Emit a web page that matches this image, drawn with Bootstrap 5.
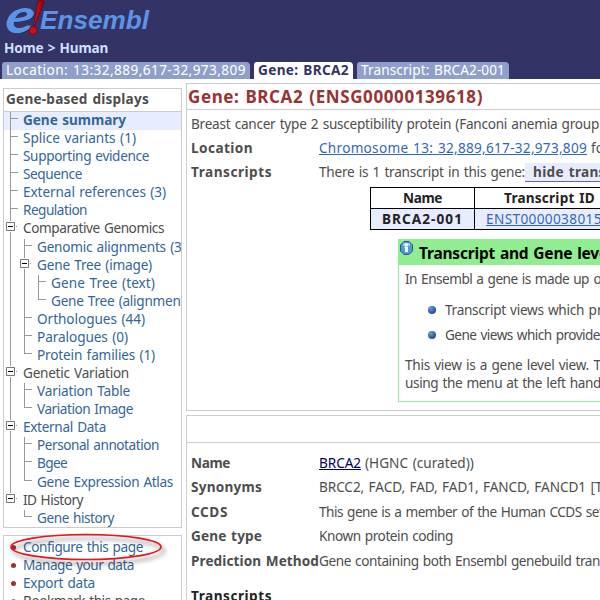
<!DOCTYPE html>
<html lang="en">
<head>
<meta charset="utf-8">
<meta name="viewport" content="width=device-width, initial-scale=1">
<title>Ensembl - Gene: BRCA2</title>
<link href="https://cdn.jsdelivr.net/npm/bootstrap@5.3.0/dist/css/bootstrap.min.css" rel="stylesheet">
<style>
body{width:600px;height:600px;overflow:hidden;background:#fff;color:#4d4d4d;font-family:"Noto Sans","Open Sans",sans-serif;font-size:13.6px;line-height:18px;white-space:nowrap;word-spacing:1px}
a{color:#336699;text-decoration:none}
b,.fw-bold{font-weight:700}
.masthead{height:79px;background:#333366;color:#cce0ff}
.logo{height:38px}
.crumbs{height:24px;padding:0 0 0 4px;line-height:19px}
.crumbs a{color:#cce0ff}
.tabs{height:17px;gap:4px;padding-left:2px}
.tabs a{height:17px;line-height:16px;padding:0 4px;background:#8f9fc9;color:#fff;border-radius:3px 4px 0 0}
.tabs a.current{background:#fff;color:#333366;font-weight:700}
.side{width:179px;margin:9px 0 0 3px}
.side .box{border:1px solid #ccc;overflow:hidden}
.boxtitle{height:23px;line-height:20px;padding-left:2px;border-bottom:1px solid #ccc;font-weight:700}
.tree{height:416px}
.tree .item{height:18.09px;line-height:15.6px;padding-left:5px}
.item.on{background:#e8ecff;font-weight:700}
.g{width:14px;height:18.09px;flex:none;position:relative}
.v::before,.t::before,.l::before,.m::before,.n::before{content:"";position:absolute;left:1px;top:0;width:1px;height:19px;background:#999}
.l::before{height:7px}
.n::before{height:6px}
.t::after,.l::after{content:"";position:absolute;left:1px;top:6px;width:8px;height:1px;background:#999}
.g svg{position:absolute;left:-3px;top:1px}
.tools .item{height:18px;line-height:18px;padding-left:7px}
.tools{height:80px;margin-top:7px;padding-top:2px}
.dot{width:5px;height:5px;border-radius:50%;background:#993333;margin-right:7px}
.ring{position:absolute;left:4px;top:528px}
.main{width:414px;margin:4px 0 0 4px;overflow:hidden}
.panel{border:1px solid #ccc;border-right:0}
.gene{height:328px}
.gene h1{height:26px;line-height:25px;font-size:17px;margin:0;padding-left:1px;font-weight:700;color:#993333;border-bottom:1px solid #ccc}
.desc{height:26px;line-height:27px;padding-left:4px}
.pair{padding-left:4px;height:24.4px;line-height:23px}
.pair b{width:128px;flex:none}
.gene .pair{height:24px;line-height:24px}
.pair a{color:#3366bb;text-decoration:underline}
.toggle{background:#e8ecff;border-bottom:1px solid #666699;height:19px;line-height:18px;padding:0 8px;font-weight:700;margin-top:3px}
.tx{width:260px;margin:3px 0 0 183px;border:1px solid #000;color:#222}
.tx>div{height:20px;line-height:20px}
.tx>div+div{height:21px;border-top:1px solid #000;background:#e8ecff}
.tx .c1{width:104px;border-right:1px solid #000;text-align:center;font-weight:700}
.tx .c2{padding-left:11px}
.tx .c2 a{color:#3366bb;text-decoration:underline}
.info{width:300px;height:163px;margin:9px 0 0 211px;border:1px solid #90ee90}
.info h2{height:25px;line-height:26px;margin:0;font-size:15.5px;font-weight:700;color:#000;background:#90ee90;padding-left:1px}
.info svg{width:13px;height:14px;margin:0 6px 10px 0}
.info .tip{padding:0 0 0 6px}
.info .pt{height:25px;line-height:25px;padding-left:29px}
.ball{width:8px;height:8px;border-radius:50%;margin-right:9px;background:radial-gradient(circle at 35% 30%,#6da0d8,#2a5f9e 55%,#174578)}
.details{height:190px;margin-top:4px}
.bar{height:27px;border-bottom:1px solid #ccc;margin-bottom:8px}
</style>
<script src="https://cdn.jsdelivr.net/npm/bootstrap@5.3.0/dist/js/bootstrap.bundle.min.js"></script>
</head>
<body>
<svg width="0" height="0" class="position-absolute"><defs><symbol id="minus" viewBox="0 0 11 11"><path d="M0 -1h10v12h-10z" fill="#fff"/><path d="M.5 1.5h8v8h-8z" fill="#fff" stroke="#777"/><path d="M2 5h5v1H2z" fill="#000"/><path d="M10 5h1v1h-1z" fill="#999"/></symbol></defs></svg>
<header class="masthead">
  <div class="logo"><svg width="160" height="38" viewBox="0 0 160 38">
    <defs><linearGradient id="bang" x1="0" x2="1"><stop offset="0" stop-color="#e01010"/><stop offset="1" stop-color="#a00000"/></linearGradient></defs>
    <g font-style="italic" font-weight="700"><text transform="translate(5 33) skewX(-8) scale(1.3 1)" font-family="Lato,sans-serif" font-weight="400" font-size="46" fill="#12244f">e</text>
    <text transform="translate(4 32) skewX(-8) scale(1.3 1)" font-family="Lato,sans-serif" font-size="46" fill="#5b94e8">e</text>
    <text x="40" y="29" font-family="Liberation Sans,Arial,sans-serif" font-size="25.500" textLength="109" lengthAdjust="spacingAndGlyphs" style="word-spacing:0" fill="#5b94e8">Ensembl</text></g>
    <path d="M7 28C12 33 22 33 31 25L30 28C22 35 11 35 7 28Z" fill="#5b94e8"/>
    <path d="M38 1 42 0 44 2 34.8 25 33.5 25.5Z" fill="url(#bang)" stroke="#500018" stroke-width=".6"/><circle cx="33" cy="30.5" r="4" fill="#d01010" stroke="#500018" stroke-width=".6"/>
  </svg></div>
  <nav class="crumbs fw-bold"><span data-w="104"><a href="#">Home</a> &gt; <a href="#">Human</a></span></nav>
  <nav class="tabs d-flex"><a href="#"><span data-w="240">Location: 13:32,889,617-32,973,809</span></a><a href="#" class="current"><span data-w="91">Gene: BRCA2</span></a><a href="#"><span data-w="144">Transcript: BRCA2-001</span></a></nav>
</header>
<div class="d-flex align-items-start">
<aside class="side flex-shrink-0">
  <div class="box" style="height:440px">
    <div class="boxtitle"><span data-w="143">Gene-based displays</span></div>
    <div class="tree">
      <div class="item on d-flex"><i class="g t"></i><a href="#" data-w="103">Gene summary</a></div>
      <div class="item d-flex"><i class="g t"></i><a href="#" data-w="113">Splice variants (1)</a></div>
      <div class="item d-flex"><i class="g t"></i><a href="#" data-w="126">Supporting evidence</a></div>
      <div class="item d-flex"><i class="g t"></i><a href="#" data-w="59">Sequence</a></div>
      <div class="item d-flex"><i class="g t"></i><a href="#" data-w="143">External references (3)</a></div>
      <div class="item d-flex"><i class="g t"></i><a href="#" data-w="64">Regulation</a></div>
      <div class="item d-flex"><i class="g m"><svg width="11" height="11"><use href="#minus"/></svg></i><span data-w="141">Comparative Genomics</span></div>
      <div class="item d-flex"><i class="g v"></i><i class="g t"></i><a href="#" data-w="156">Genomic alignments (38)</a></div>
      <div class="item d-flex"><i class="g v"></i><i class="g m"><svg width="11" height="11"><use href="#minus"/></svg></i><a href="#" data-w="115">Gene Tree (image)</a></div>
      <div class="item d-flex"><i class="g v"></i><i class="g v"></i><i class="g t"></i><a href="#" data-w="104">Gene Tree (text)</a></div>
      <div class="item d-flex"><i class="g v"></i><i class="g v"></i><i class="g l"></i><a href="#" data-w="138">Gene Tree (alignment)</a></div>
      <div class="item d-flex"><i class="g v"></i><i class="g t"></i><a href="#" data-w="108">Orthologues (44)</a></div>
      <div class="item d-flex"><i class="g v"></i><i class="g t"></i><a href="#" data-w="91">Paralogues (0)</a></div>
      <div class="item d-flex"><i class="g v"></i><i class="g l"></i><a href="#" data-w="118">Protein families (1)</a></div>
      <div class="item d-flex"><i class="g m"><svg width="11" height="11"><use href="#minus"/></svg></i><span data-w="106">Genetic Variation</span></div>
      <div class="item d-flex"><i class="g v"></i><i class="g t"></i><a href="#" data-w="93">Variation Table</a></div>
      <div class="item d-flex"><i class="g v"></i><i class="g l"></i><a href="#" data-w="96">Variation Image</a></div>
      <div class="item d-flex"><i class="g m"><svg width="11" height="11"><use href="#minus"/></svg></i><a href="#" data-w="83">External Data</a></div>
      <div class="item d-flex"><i class="g v"></i><i class="g t"></i><a href="#" data-w="122">Personal annotation</a></div>
      <div class="item d-flex"><i class="g v"></i><i class="g t"></i><a href="#" data-w="30">Bgee</a></div>
      <div class="item d-flex"><i class="g v"></i><i class="g l"></i><a href="#" data-w="136">Gene Expression Atlas</a></div>
      <div class="item d-flex"><i class="g n"><svg width="11" height="11"><use href="#minus"/></svg></i><span data-w="60">ID History</span></div>
      <div class="item d-flex"><i class="g"></i><i class="g l"></i><a href="#" data-w="77">Gene history</a></div>
    </div>
  </div>
  <div class="box tools">
    <div class="item d-flex align-items-center"><i class="dot"></i><a href="#" data-w="120">Configure this page</a></div>
    <div class="item d-flex align-items-center"><i class="dot"></i><a href="#" data-w="111">Manage your data</a></div>
    <div class="item d-flex align-items-center"><i class="dot"></i><a href="#" data-w="72">Export data</a></div>
    <div class="item d-flex align-items-center"><i class="dot" style="background:#888"></i><span data-w="122">Bookmark this page</span></div>
  </div>
</aside>
<main class="main flex-shrink-0">
  <section class="panel gene">
    <h1><span data-w="295">Gene: BRCA2 (ENSG00000139618)</span></h1>
    <div class="desc"><span data-w="408">Breast cancer type 2 susceptibility protein (Fanconi anemia group</span></div>
    <div class="pair d-flex"><b><span data-w="62">Location</span></b><a href="#" data-w="268">Chromosome 13: 32,889,617-32,973,809</a><span class="ms-1">for</span></div>
    <div class="pair d-flex"><b><span data-w="81">Transcripts</span></b><span data-w="206">There is 1 transcript in this gene:</span><span class="toggle"><span data-w="113">hide transcripts</span></span></div>
    <div class="tx">
      <div class="d-flex"><div class="c1"><span data-w="39">Name</span></div><div class="fw-bold" style="padding-left:29px"><span data-w="91">Transcript ID</span></div></div>
      <div class="d-flex"><div class="c1"><span data-w="81">BRCA2-001</span></div><div class="c2"><a href="#" data-w="124">ENST00000380152</a></div></div>
    </div>
    <div class="info">
      <h2 class="d-flex align-items-center"><svg viewBox="0 0 13 14"><path d="M4 .5h5l3.500 3.500v6L9 13.500H4L.5 10V4z" fill="#4f98dc" stroke="#27598f"/><path d="M3 2h7v3H3z" fill="#9ccaf2"/><circle cx="6.500" cy="3.500" r="1.500" fill="#fff"/><path d="M4.500 5.500h3.500v5.500h-3v-4h-.5z" fill="#fff"/></svg><span><span data-w="180">Transcript and Gene lev</span>el displays</span></h2>
      <div class="tip" style="height:32px;line-height:28px"><span data-w="184">In Ensembl a gene is made up</span> of one</div>
      <div class="pt d-flex align-items-center"><i class="ball"></i><span><span data-w="139">Transcript views which</span> provide</span></div>
      <div class="pt d-flex align-items-center"><i class="ball"></i><span><span data-w="155">Gene views which provide</span> data</span></div>
      <div class="tip" style="padding-top:9px"><span data-w="184">This view is a gene level view.</span> To access</div>
      <div class="tip"><span data-w="196">using the menu at the left hand</span> side</div>
    </div>
  </section>
  <section class="panel details">
    <div class="bar"></div>
    <div class="pair d-flex"><b><span data-w="39">Name</span></b><a href="#" data-w="42" style="color:#000066">BRCA2</a><span class="ms-1" data-w="109">(HGNC (curated))</span></div>
    <div class="pair d-flex"><b><span data-w="71">Synonyms</span></b><span><span data-w="267">BRCC2, FACD, FAD, FAD1, FANCD, FANCD1</span> [To view</span></div>
    <div class="pair d-flex"><b><span data-w="37">CCDS</span></b><span><span data-w="280">This gene is a member of the Human CCDS se</span>t</span></div>
    <div class="pair d-flex"><b><span data-w="71">Gene type</span></b><span data-w="134">Known protein coding</span></div>
    <div class="pair d-flex"><b><span data-w="128">Prediction Method</span></b><span><span data-w="281">Gene containing both Ensembl genebuild tran</span>script</span></div>
    <div class="pair d-flex" style="padding-top:11px"><b style="color:#222"><span data-w="81">Transcripts</span></b></div>
  </section>
</main>
</div>
<svg class="ring" width="170" height="42" viewBox="0 0 170 42"><defs><filter id="soft" x="-10%" y="-30%" width="120%" height="170%"><feDropShadow dx="3" dy="4" stdDeviation="2" flood-color="#000" flood-opacity=".5"/></filter></defs><ellipse cx="82" cy="19" rx="75" ry="12.500" fill="none" stroke="#e8141c" stroke-width="1.700" filter="url(#soft)"/></svg>
<script>
document.querySelectorAll('[data-w]').forEach(el => {
  const n = el.textContent.length;
  const r = document.createRange(); r.selectNodeContents(el);
  el.style.letterSpacing = ((el.dataset.w - r.getBoundingClientRect().width) / n).toFixed(3) + 'px';
});
</script>
</body>
</html>
